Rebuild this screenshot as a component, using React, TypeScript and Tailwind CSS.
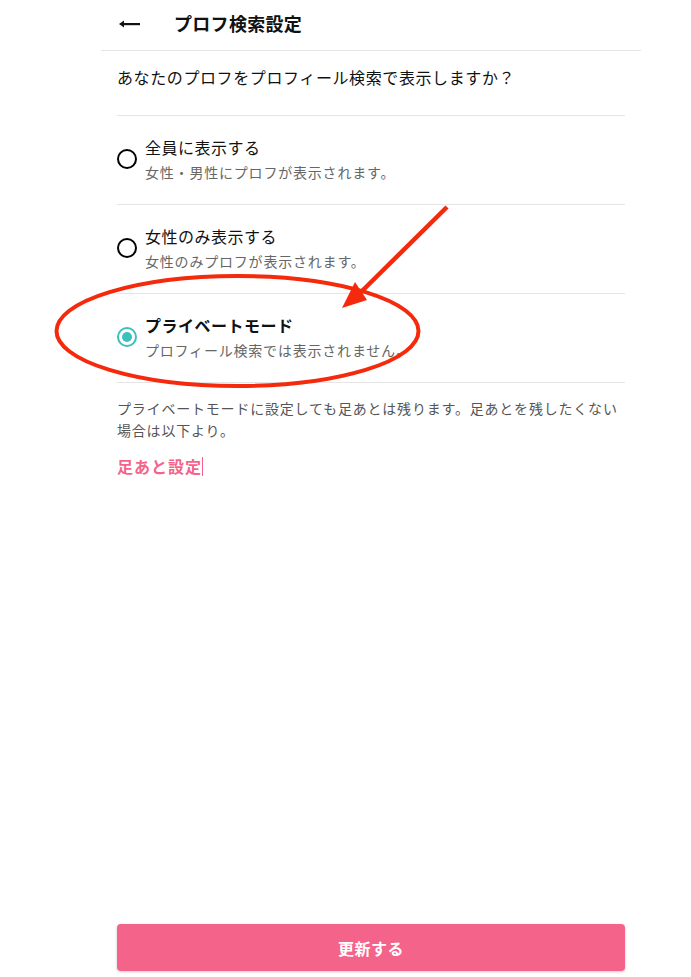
import { useState } from "react";

const options = [
    { id: "all", title: "全員に表示する", desc: "女性・男性にプロフが表示されます。" },
    { id: "female", title: "女性のみ表示する", desc: "女性のみプロフが表示されます。" },
    { id: "private", title: "プライベートモード", desc: "プロフィール検索では表示されません。" },
];

const font = { fontFamily: '"Noto Sans CJK JP", "Noto Sans", sans-serif' };

const Radio = ({ checked }: { checked: boolean }) => (
    <span
        className={`flex h-5 w-5 shrink-0 items-center justify-center rounded-full border-2 ${
            checked ? "border-[#3dbfbf]" : "border-black"
        }`}
    >
        {checked && <span className="h-[10px] w-[10px] rounded-full bg-[#3dbfbf]" />}
    </span>
);

export default function App() {
    const [selected, setSelected] = useState<string>("private");

    return (
        <div className="relative flex min-h-screen flex-col bg-white text-[#111]" style={font}>
            <div className="ml-[101px] flex w-[540px] flex-1 flex-col">
                {/* header */}
                <div className="flex h-[51px] items-center border-b border-[#e5e5e5] px-[18px]">
                    <svg width="22" height="10" viewBox="0 0 22 10" className="mt-[-3px]">
                        <path d="M0 5 L5 1.5 L5 8.5 Z" fill="#111" />
                        <rect x="3" y="4" width="18" height="2.2" fill="#111" />
                    </svg>
                    <h1 className="mt-[-4px] ml-[33px] text-[18px] font-bold tracking-[0.3px]">プロフ検索設定</h1>
                </div>

                <div className="flex flex-1 flex-col px-4">
                    <p className="border-b border-[#e5e5e5] pt-[14px] pb-[26px] text-base leading-6 tracking-[0.6px]">
                        あなたのプロフをプロフィール検索で表示しますか？
                    </p>

                    {options.map((o) => (
                        <label
                            key={o.id}
                            onClick={() => setSelected(o.id)}
                            className="flex cursor-pointer items-center gap-2 border-b border-[#e5e5e5] pt-[19px] pb-[21px]"
                        >
                            <Radio checked={selected === o.id} />
                            <div className="flex flex-col">
                                <span
                                    className={`text-base leading-6 tracking-[0.5px] ${
                                        selected === o.id ? "font-bold" : ""
                                    }`}
                                >
                                    {o.title}
                                </span>
                                <span className="mt-[2px] text-[14px] leading-[22px] tracking-[0.8px] text-[#666]">
                                    {o.desc}
                                </span>
                            </div>
                        </label>
                    ))}

                    <p className="pt-[14px] text-[14px] leading-[22px] tracking-[0.8px] text-[#555]">
                        プライベートモードに設定しても足あとは残ります。足あとを残したくない場合は以下より。
                    </p>
                    <div className="mt-[13px] flex items-center">
                        <a className="text-base leading-6 font-bold tracking-[1px] text-[#f4648a]">足あと設定</a>
                        <span className="h-[19px] w-px bg-[#f4648a]" />
                    </div>

                    <button className="mt-auto mb-[6px] h-[47px] w-full rounded bg-[#f4638a] text-base font-bold tracking-[0.5px] text-white shadow-[0_1px_3px_rgba(0,0,0,0.2)]">
                        更新する
                    </button>
                </div>
            </div>

            {/* red marker drawn on top */}
            <svg
                className="pointer-events-none absolute top-0 left-0"
                width="691"
                height="977"
                viewBox="0 0 691 977"
            >
                <ellipse cx="237.5" cy="331" rx="181" ry="55" fill="none" stroke="#f52a0c" strokeWidth="4" />
                <line x1="447" y1="207" x2="358" y2="295" stroke="#f52a0c" strokeWidth="4.5" />
                <path d="M342 308 L355 282 L367 300 Z" fill="#f52a0c" />
            </svg>
        </div>
    );
}
